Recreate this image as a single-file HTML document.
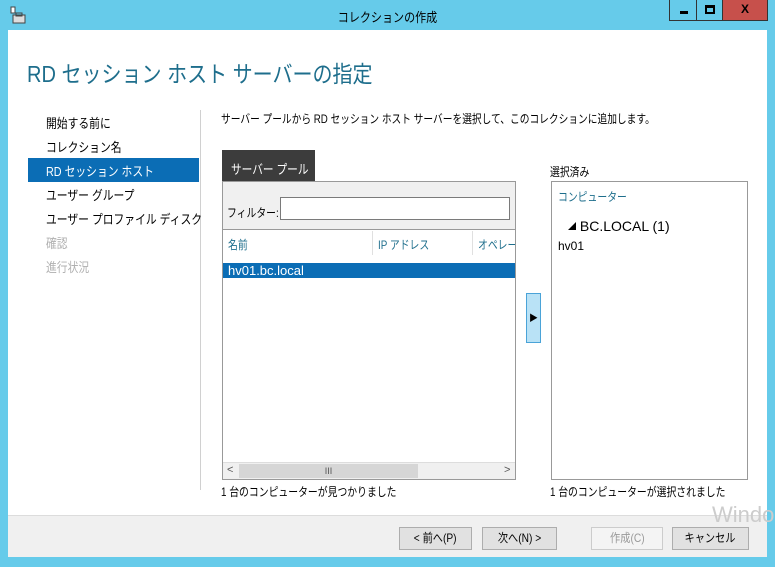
<!DOCTYPE html><html><head><meta charset="utf-8"><style>
*{margin:0;padding:0;box-sizing:border-box}
body{width:775px;height:567px;background:#66cbea;position:relative;overflow:hidden;font-family:"Liberation Sans","Noto Sans CJK JP",sans-serif;font-size:12px;color:#000}
.a{position:absolute;white-space:nowrap}
.s{transform:scaleX(0.82);transform-origin:0 0}
.btn{position:absolute;top:527px;height:23px;border:1px solid #adadad;background:#e1e1e1;text-align:center;line-height:21px;font-size:12px;white-space:nowrap}
.btn span{display:inline-block;transform:scaleX(0.85)}
</style></head><body>
<div class="a" style="left:10px;top:6px;width:16px;height:18px">
<svg width="16" height="18"><rect x="1" y="1" width="4" height="6" fill="#fff" stroke="#444"/><rect x="3" y="9" width="12" height="8" fill="#ddd" stroke="#444"/><rect x="6" y="7" width="6" height="3" fill="none" stroke="#444"/></svg></div>
<div class="a" style="left:0;top:7px;width:775px;text-align:center;font-size:13px"><span style="display:inline-block;transform:scaleX(0.85)">コレクションの作成</span></div>
<div class="a" style="left:669px;top:0;width:28px;height:21px;border:1px solid #333;border-top:none;background:#66cbea"><div class="a" style="left:10px;top:11px;width:8px;height:3px;background:#000"></div></div>
<div class="a" style="left:696px;top:0;width:27px;height:21px;border:1px solid #333;border-top:none;background:#66cbea"><div class="a" style="left:8px;top:5px;width:10px;height:9px;border:2px solid #000;border-top-width:3px"></div></div>
<div class="a" style="left:722px;top:0;width:46px;height:21px;border:1px solid #333;border-top:none;background:#c7504b;color:#000;text-align:center;font-weight:bold;line-height:18px;font-size:12px">X</div>
<div class="a" style="left:8px;top:30px;width:759px;height:485px;background:#fff"></div>
<div class="a" style="left:8px;top:515px;width:759px;height:42px;background:#f0f0f0;border-top:1px solid #dcdcdc"></div>
<div class="a s" style="left:27px;top:55px;font-size:23px;color:#1e6e8c;transform:scaleX(0.87)">RD セッション ホスト サーバーの指定</div>
<div class="a" style="left:200px;top:110px;width:1px;height:380px;background:#d0d0d0"></div>
<div class="a" style="left:28px;top:158px;width:171px;height:24px;background:#0b6db5"></div>
<div class="a s" style="left:46px;top:112px;line-height:24px;font-size:13px;transform:scaleX(0.83)">開始する前に<br>コレクション名<br><span style="color:#fff">RD セッション ホスト</span><br>ユーザー グループ<br>ユーザー プロファイル ディスク<br><span style="color:#b0b0b0">確認<br>進行状況</span></div>
<div class="a s" style="left:221px;top:110px;font-size:12px;transform:scaleX(0.81)">サーバー プールから RD セッション ホスト サーバーを選択して、このコレクションに追加します。</div>
<div class="a" style="left:222px;top:150px;width:93px;height:32px;background:#3c3c3c;color:#fff;font-size:13px;padding:9px 0 0 9px"><div class="s">サーバー プール</div></div>
<div class="a" style="left:222px;top:181px;width:294px;height:299px;border:1px solid #999;background:#fff">
<div class="a" style="left:0;top:0;width:292px;height:48px;background:#f0f0f0;border-bottom:1px solid #999"></div>
<div class="a s" style="left:4px;top:22px">フィルター:</div>
<div class="a" style="left:57px;top:15px;width:230px;height:23px;border:1px solid #7a7a7a;background:#fff"></div>
<div class="a s" style="left:5px;top:54px;color:#1e6e8c">名前</div>
<div class="a" style="left:149px;top:49px;width:1px;height:24px;background:#e0e0e0"></div>
<div class="a s" style="left:155px;top:54px;color:#1e6e8c">IP アドレス</div>
<div class="a" style="left:249px;top:49px;width:1px;height:24px;background:#e0e0e0"></div>
<div class="a" style="left:255px;top:54px;color:#1e6e8c;width:37px;overflow:hidden"><div class="s">オペレー</div></div>
<div class="a" style="left:0;top:81px;width:292px;height:15px;background:#0b6db5;color:#fff;padding-left:5px;line-height:15px;font-size:13px">hv01.bc.local</div>
<div class="a" style="left:0;top:280px;width:292px;height:17px;background:#f0f0f0;border-top:1px solid #ddd">
<div class="a" style="left:4px;top:1px;font-size:11px;color:#555">&lt;</div>
<div class="a" style="left:16px;top:1px;width:179px;height:14px;background:#d6d6d6;text-align:center;font-size:9px;line-height:14px;color:#555">III</div>
<div class="a" style="left:281px;top:1px;font-size:11px;color:#555">&gt;</div></div>
</div>
<div class="a s" style="left:221px;top:483px">1 台のコンピューターが見つかりました</div>
<div class="a" style="left:526px;top:293px;width:15px;height:50px;background:#b9e2f6;border:1px solid #4aa3d8;font-size:9px;text-align:center;line-height:48px">▶</div>
<div class="a s" style="left:550px;top:163px">選択済み</div>
<div class="a" style="left:551px;top:181px;width:197px;height:299px;border:1px solid #999;background:#fff">
<div class="a s" style="left:6px;top:6px;color:#1e6e8c">コンピューター</div>
<div class="a" style="left:16px;top:36px;font-size:14px"><span style="font-size:8px;vertical-align:2px">◢</span> BC.LOCAL (1)</div>
<div class="a" style="left:6px;top:57px">hv01</div>
</div>
<div class="a s" style="left:550px;top:483px">1 台のコンピューターが選択されました</div>
<div class="btn" style="left:399px;width:73px"><span>&lt; 前へ(P)</span></div>
<div class="btn" style="left:482px;width:75px"><span>次へ(N) &gt;</span></div>
<div class="btn" style="left:591px;width:72px;background:#f4f4f4;border-color:#ccc;color:#999"><span>作成(C)</span></div>
<div class="btn" style="left:672px;width:77px"><span>キャンセル</span></div>
<div class="a" style="left:712px;top:502px;font-size:22px;color:#ccc">Windo</div>
</body></html>
